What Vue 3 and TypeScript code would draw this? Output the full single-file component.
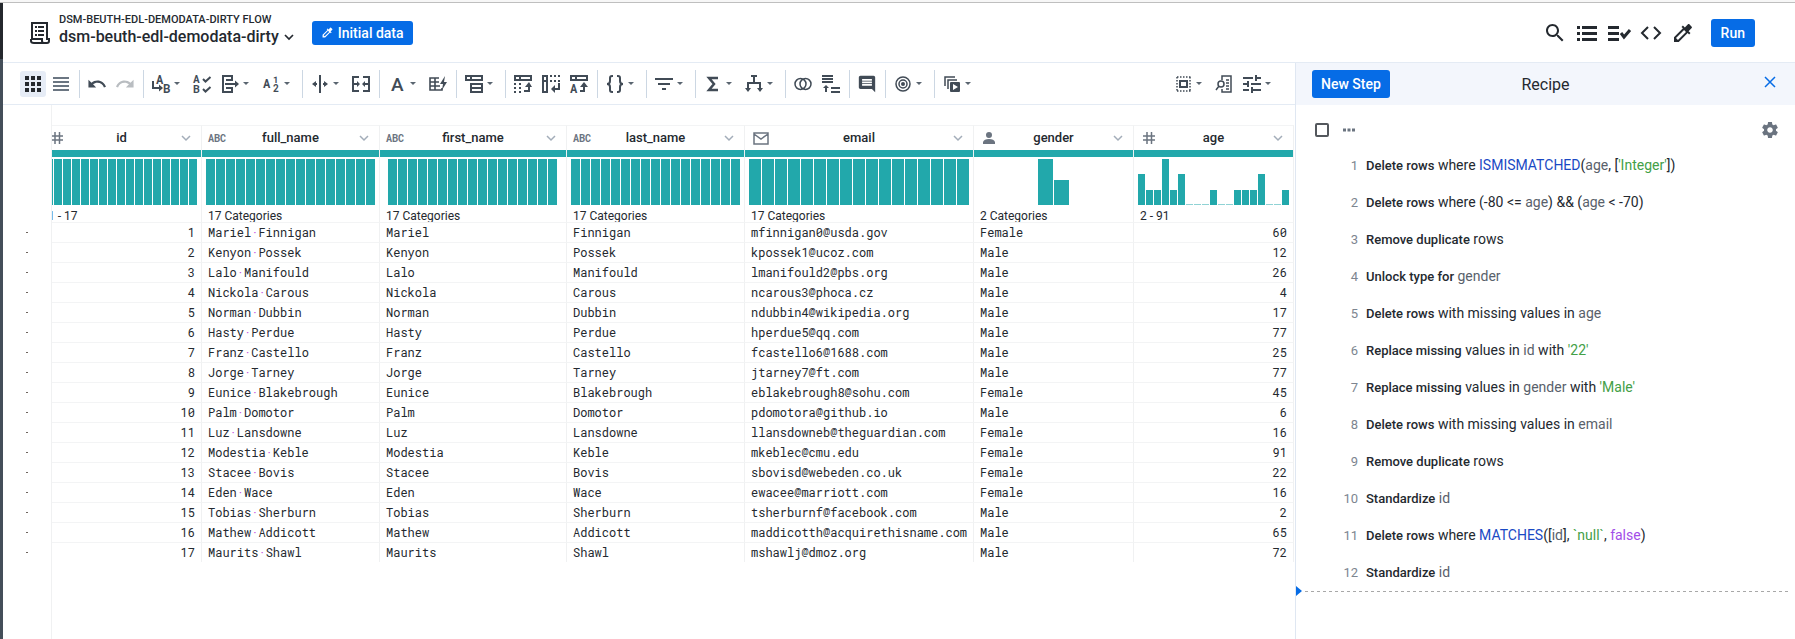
<script setup lang="ts">
import { h, ref } from 'vue'

interface Mark {
  d: string
  w?: number
  dash?: string
}
interface Letter {
  x: number
  y: number
  size: number
  t: string
  weight?: number
  family?: string
}
interface IconDef {
  box?: string
  marks: Mark[]
  letters?: Letter[]
}
interface Tool {
  icon: string
  label: string
  menu?: boolean
  muted?: boolean
}
interface Column {
  key: string
  kind: 'number' | 'text' | 'email' | 'person'
  summary: string
  bar: number
  bars: number[]
}
interface Part {
  t: string
  c?: 'verb' | 'fn' | 'col' | 'str' | 'bool'
}

const icons: Record<string, IconDef> = {
  recipe: {
    box: '0 0 20 22',
    marks: [
      { d: 'M2 17V1h15v16', w: 2 },
      { d: 'M1 17h11v2q0 2 2 2h3q2 0 2-2v-2h-3M1 17v2q0 2 3 2h11', w: 2 },
      { d: 'M5 4h2v2H5zM5 8h2v2H5zM5 12h2v2H5zM8 4h6v2H8zM8 8h6v2H8zM8 12h6v2H8z' },
    ],
  },
  chevron: { box: '0 0 10 8', marks: [{ d: 'M1 2l4 4 4-4', w: 1.7 }] },
  thinChevron: { box: '0 0 10 8', marks: [{ d: 'M1 2l4 4 4-4', w: 1.5 }] },
  dropper: {
    box: '2 2 20 20',
    marks: [
      {
        d: 'M20.71 5.63l-2.34-2.34c-.39-.39-1.02-.39-1.41 0l-3.12 3.12-1.93-1.91-1.41 1.41 1.42 1.42L3 16.25V21h4.75l8.92-8.92 1.42 1.42 1.41-1.41-1.92-1.92 3.12-3.12c.4-.4.4-1.03.01-1.42zM6.92 19L5 17.08l8.06-8.06 1.92 1.92L6.92 19z',
      },
    ],
  },
  search: {
    box: '2 2 20 20',
    marks: [
      {
        d: 'M15.5 14h-.79l-.28-.27C15.41 12.59 16 11.11 16 9.5 16 5.91 13.09 3 9.5 3S3 5.91 3 9.5 5.91 16 9.5 16c1.61 0 3.09-.59 4.23-1.57l.27.28v.79l5 4.99L20.49 19l-4.99-5zm-6 0C7.01 14 5 11.99 5 9.5S7.01 5 9.5 5 14 7.01 14 9.5 11.99 14 9.5 14z',
      },
    ],
  },
  bullets: {
    box: '0 0 22 20',
    marks: [{ d: 'M1 3h3v3H1zM1 9h3v3H1zM1 15h3v3H1zM6 3h15v3H6zM6 9h15v3H6zM6 15h15v3H6z' }],
  },
  listCheck: {
    box: '0 0 24 20',
    marks: [{ d: 'M1 3h11v3H1zM1 9h11v3H1zM1 15h11v3H1z' }, { d: 'M14 10l3 4 6-7', w: 3 }],
  },
  code: { box: '0 0 20 20', marks: [{ d: 'M7 4l-6 6 6 6M13 4l6 6-6 6', w: 2 }] },
  grid: {
    marks: [
      {
        d: 'M1 1h4v4H1zM7 1h4v4H7zM13 1h4v4h-4zM1 7h4v4H1zM7 7h4v4H7zM13 7h4v4h-4zM1 13h4v4H1zM7 13h4v4H7zM13 13h4v4h-4z',
      },
    ],
  },
  lines: { marks: [{ d: 'M1 3h16M1 7h16M1 11h16M1 15h16', w: 2 }] },
  undo: {
    box: '1.5 1.5 21 21',
    marks: [
      {
        d: 'M12.5 8c-2.65 0-5.05.99-6.9 2.6L2 7v9h9l-3.62-3.62c1.39-1.16 3.16-1.88 5.12-1.88 3.54 0 6.55 2.31 7.6 5.5l2.37-.78C21.08 11.03 17.15 8 12.5 8z',
      },
    ],
  },
  redo: {
    box: '1.5 1.5 21 21',
    marks: [
      {
        d: 'M18.4 10.6C16.55 8.99 14.15 8 11.5 8c-4.65 0-8.58 3.03-9.96 7.22L3.9 16c1.05-3.19 4.05-5.5 7.6-5.5 1.95 0 3.73.72 5.12 1.88L13 16h9V7l-3.6 3.6z',
      },
    ],
  },
  replace: {
    marks: [{ d: 'M1 6v7h7', w: 2 }, { d: 'M7 9.5l4 3.5-4 3.5z' }],
    letters: [
      { x: 4, y: 9, size: 12, t: 'A' },
      { x: 11, y: 18, size: 12, t: 'B' },
    ],
  },
  standardize: {
    marks: [{ d: 'M10 4l2.5 2.5L17.5 2M10 14l2.5 2.5L17.5 12', w: 2 }],
    letters: [
      { x: 0, y: 8, size: 11, t: 'A' },
      { x: 0, y: 18, size: 11, t: 'B' },
    ],
  },
  extract: {
    marks: [{ d: 'M11 6V1H2v16h9v-5M5 5h6M5 13h6M4 9h11', w: 2 }, { d: 'M14 5.5L18 9l-4 3.5z' }],
  },
  count: {
    marks: [],
    letters: [
      { x: 1, y: 13, size: 12, t: 'A' },
      { x: 11, y: 8, size: 9, t: '1' },
      { x: 11, y: 17, size: 10, t: '2' },
    ],
  },
  split: {
    marks: [{ d: 'M9 0v18', w: 2 }, { d: 'M3 9h3M12 9h3', w: 2 }, { d: 'M5 6L1 9l4 3zM13 6l4 3-4 3z' }],
  },
  merge: {
    marks: [
      { d: 'M7 2H1v14h6M11 2h6v14h-6M2 9h3M13 9h3', w: 2 },
      { d: 'M5 6l3 3-3 3zM13 6l-3 3 3 3z' },
    ],
  },
  format: {
    marks: [],
    letters: [{ x: 3, y: 16, size: 19, t: 'A', weight: 500, family: 'Roboto, sans-serif' }],
  },
  tableBolt: {
    marks: [{ d: 'M10 3H1v12h12v-2M1 7h9M1 11h10M6 3v12', w: 1.6 }, { d: 'M16 1l-5 8h3l-1 6 5-8h-3z' }],
  },
  nest: {
    marks: [{ d: 'M1 1h16v4H1zM6 1v4M6 9h11v8H6zM6 13h11', w: 2 }],
  },
  pivot: {
    marks: [
      { d: 'M1 1h16v4H1zM6 1v4M10 16h5v-5', w: 2 },
      { d: 'M11 12l4-5 3 5z' },
      { d: 'M1 8v10M6 8v10', w: 2, dash: '2 2' },
    ],
  },
  unpivot: {
    marks: [
      { d: 'M1 1h4v16H1zM1 6h4M17 8v6h-5', w: 2 },
      { d: 'M13 10v8l-4-4z' },
      { d: 'M8 1h10M8 6h10', w: 2, dash: '2 2' },
    ],
  },
  headerRow: {
    marks: [{ d: 'M1 1h16v4H1zM6 1v4M10 16h4v-5', w: 2 }, { d: 'M10 12l4-5 4 5z' }],
    letters: [{ x: 0, y: 18, size: 12, t: 'A' }],
  },
  braces: {
    marks: [
      { d: 'M7 1H6Q4 1 4 3v3q0 3-3 3 3 0 3 3v3q0 2 2 2h1M11 1h1q2 0 2 2v3q0 3 3 3-3 0-3 3v3q0 2-2 2h-1', w: 2 },
    ],
  },
  filter: { marks: [{ d: 'M0 4h18M3 9h12M7 14h4', w: 2 }] },
  sum: { marks: [{ d: 'M14 3H5l5 6-5 6h9', w: 2.5 }] },
  branch: {
    marks: [{ d: 'M6 1h6M9 1v7M3 14V8h12v6', w: 2 }, { d: 'M0 13h6l-3 4zM12 13h6l-3 4z' }],
  },
  join: {
    marks: [
      { d: 'M1 9a5.5 5.5 0 1 0 11 0a5.5 5.5 0 1 0-11 0M6 9a5.5 5.5 0 1 0 11 0a5.5 5.5 0 1 0-11 0', w: 1.5 },
    ],
  },
  union: {
    marks: [{ d: 'M0 1h11M0 4h11M0 7h11M9 13h9M9 17h9', w: 2 }, { d: 'M4 12v5', w: 2 }, { d: 'M1 13l3-3 3 3z' }],
  },
  comment: {
    box: '1 1 22 22',
    marks: [
      {
        d: 'M21.99 4c0-1.1-.89-2-1.99-2H4c-1.1 0-2 .9-2 2v12c0 1.1.9 2 2 2h14l4 4-.01-18zM18 14H6v-2h12v2zm0-3H6V9h12v2zm0-3H6V6h12v2z',
      },
    ],
  },
  target: {
    marks: [
      { d: 'M2 9a7 7 0 1 0 14 0a7 7 0 1 0-14 0M5 9a4 4 0 1 0 8 0a4 4 0 1 0-8 0', w: 1.5 },
      { d: 'M7 9a2 2 0 1 0 4 0a2 2 0 1 0-4 0' },
    ],
  },
  stack: {
    marks: [
      { d: 'M2 11V2h10M5 14V5h9', w: 1.5 },
      { d: 'M8 7h8q1 0 1 1v8q0 1-1 1H8q-1 0-1-1V8q0-1 1-1zM10 9v6l5-3z' },
    ],
  },
  selection: {
    marks: [
      { d: 'M3 2h14M3 16h14M3 2v14M16 2v14', w: 1.5, dash: '1.5 1.5' },
      { d: 'M6 6h7v6H6z', w: 2 },
    ],
  },
  inspect: {
    marks: [
      { d: 'M7 5V1h9v16H7v-3', w: 1.5 },
      { d: 'M3 9a3 3 0 1 0 6 0a3 3 0 1 0-6 0M4 11l-3 4', w: 1.5 },
      { d: 'M11 5h3M11 8h3M11 11h3M11 14h3', w: 1.5 },
    ],
  },
  tune: {
    box: '3 3 18 18',
    marks: [
      {
        d: 'M3 17v2h6v-2H3zM3 5v2h10V5H3zm10 16v-2h8v-2h-8v-2h-2v6h2zM7 9v2H3v2h4v2h2V9H7zm14 4v-2H11v2h10zm-6-4h2V7h4V5h-4V3h-2v6z',
      },
    ],
  },
  gear: {
    box: '2 2 20 20',
    marks: [
      {
        d: 'M19.43 12.98c.04-.32.07-.64.07-.98s-.03-.66-.07-.98l2.11-1.65c.19-.15.24-.42.12-.64l-2-3.46c-.12-.22-.39-.3-.61-.22l-2.49 1c-.52-.4-1.08-.73-1.69-.98l-.38-2.65C14.46 2.18 14.25 2 14 2h-4c-.25 0-.46.18-.49.42l-.38 2.65c-.61.25-1.17.59-1.69.98l-2.49-1c-.23-.09-.49 0-.61.22l-2 3.46c-.13.22-.07.49.12.64l2.11 1.65c-.04.32-.07.65-.07.98s.03.66.07.98l-2.11 1.65c-.19.15-.24.42-.12.64l2 3.46c.12.22.39.3.61.22l2.49-1c.52.4 1.08.73 1.69.98l.38 2.65c.03.24.24.42.49.42h4c.25 0 .46-.18.49-.42l.38-2.65c.61-.25 1.17-.59 1.69-.98l2.49 1c.23.09.49 0 .61-.22l2-3.46c.12-.22.07-.49-.12-.64l-2.11-1.65zM12 15.5c-1.93 0-3.5-1.57-3.5-3.5s1.57-3.5 3.5-3.5 3.5 1.57 3.5 3.5-1.57 3.5-3.5 3.5z',
      },
    ],
  },
  close: { box: '0 0 12 12', marks: [{ d: 'M1 1l10 10M11 1L1 11', w: 1.5 }] },
  dots: { box: '0 0 12 4', marks: [{ d: 'M0 .5h3v3H0zM4.5 .5h3v3h-3zM9 .5h3v3H9z' }] },
  number: { box: '0 0 12 12', marks: [{ d: 'M0 4h12M0 8h12M4 0v12M8.5 0v12', w: 1.5 }] },
  email: { box: '0 0 16 14', marks: [{ d: 'M1 2h14v11H1zM1 3l7 5 7-5', w: 1.5 }] },
  person: {
    box: '0 0 12 12',
    marks: [{ d: 'M6 0a3 3 0 1 1 0 6a3 3 0 1 1 0-6zM0 12v-2q1-3 6-3t6 3v2z' }],
  },
}

const Icon = (props: { name: string; width?: number; height?: number }) => {
  const def = icons[props.name]
  return h(
    'svg',
    {
      width: props.width ?? 18,
      height: props.height ?? 18,
      viewBox: def.box ?? '0 0 18 18',
      'aria-hidden': 'true',
    },
    [
      ...def.marks.map((m) =>
        h('path', {
          d: m.d,
          fill: m.w ? 'none' : 'currentColor',
          'fill-rule': 'evenodd',
          stroke: m.w ? 'currentColor' : 'none',
          'stroke-width': m.w,
          'stroke-dasharray': m.dash,
        }),
      ),
      ...(def.letters ?? []).map((l) =>
        h(
          'text',
          {
            x: l.x,
            y: l.y,
            'font-size': l.size,
            'font-weight': l.weight ?? 700,
            'font-family': l.family ?? "'Roboto Mono', 'DejaVu Sans Mono', monospace",
            fill: 'currentColor',
          },
          l.t,
        ),
      ),
    ],
  )
}
Icon.props = ['name', 'width', 'height']

const toolGroups: Tool[][] = [
  [
    { icon: 'undo', label: 'Undo' },
    { icon: 'redo', label: 'Redo', muted: true },
  ],
  [
    { icon: 'replace', label: 'Replace', menu: true },
    { icon: 'standardize', label: 'Standardize' },
    { icon: 'extract', label: 'Extract', menu: true },
    { icon: 'count', label: 'Count matches', menu: true },
  ],
  [
    { icon: 'split', label: 'Split column', menu: true },
    { icon: 'merge', label: 'Merge columns' },
  ],
  [
    { icon: 'format', label: 'Format', menu: true },
    { icon: 'tableBolt', label: 'Lookup' },
  ],
  [{ icon: 'nest', label: 'Group', menu: true }],
  [
    { icon: 'pivot', label: 'Pivot' },
    { icon: 'unpivot', label: 'Unpivot' },
    { icon: 'headerRow', label: 'Rows to headers' },
  ],
  [{ icon: 'braces', label: 'Nested data', menu: true }],
  [{ icon: 'filter', label: 'Filter', menu: true }],
  [
    { icon: 'sum', label: 'Functions', menu: true },
    { icon: 'branch', label: 'Conditional', menu: true },
  ],
  [
    { icon: 'join', label: 'Join' },
    { icon: 'union', label: 'Union' },
  ],
  [{ icon: 'comment', label: 'Comment' }],
  [{ icon: 'target', label: 'Target', menu: true }],
  [{ icon: 'stack', label: 'Macros', menu: true }],
]

const sideTools: Tool[] = [
  { icon: 'selection', label: 'Selection', menu: true },
  { icon: 'inspect', label: 'Find column' },
  { icon: 'tune', label: 'View options', menu: true },
]

const headerTools = [
  { icon: 'search', label: 'Search', width: 20 },
  { icon: 'bullets', label: 'Recipe', width: 22 },
  { icon: 'listCheck', label: 'Checks', width: 24 },
  { icon: 'code', label: 'Code', width: 20 },
  { icon: 'dropper', label: 'Samples', width: 20 },
]

const full = (n: number): number[] => Array.from({ length: n }, () => 46)

const columns: Column[] = [
  { key: 'id', kind: 'number', summary: '1 - 17', bar: 8, bars: full(17) },
  { key: 'full_name', kind: 'text', summary: '17 Categories', bar: 9, bars: full(17) },
  { key: 'first_name', kind: 'text', summary: '17 Categories', bar: 9, bars: full(17) },
  { key: 'last_name', kind: 'text', summary: '17 Categories', bar: 9, bars: full(17) },
  { key: 'email', kind: 'email', summary: '17 Categories', bar: 12, bars: full(17) },
  { key: 'gender', kind: 'person', summary: '2 Categories', bar: 15, bars: [46, 25] },
  {
    key: 'age',
    kind: 'number',
    summary: '2 - 91',
    bar: 7,
    bars: [31, 15, 15, 46, 15, 31, 0, 0, 0, 15, 0, 0, 15, 15, 15, 31, 0, 0, 15],
  },
]

const people: [string, string, string, string, number][] = [
  ['Mariel', 'Finnigan', 'mfinnigan0@usda.gov', 'Female', 60],
  ['Kenyon', 'Possek', 'kpossek1@ucoz.com', 'Male', 12],
  ['Lalo', 'Manifould', 'lmanifould2@pbs.org', 'Male', 26],
  ['Nickola', 'Carous', 'ncarous3@phoca.cz', 'Male', 4],
  ['Norman', 'Dubbin', 'ndubbin4@wikipedia.org', 'Male', 17],
  ['Hasty', 'Perdue', 'hperdue5@qq.com', 'Male', 77],
  ['Franz', 'Castello', 'fcastello6@1688.com', 'Male', 25],
  ['Jorge', 'Tarney', 'jtarney7@ft.com', 'Male', 77],
  ['Eunice', 'Blakebrough', 'eblakebrough8@sohu.com', 'Female', 45],
  ['Palm', 'Domotor', 'pdomotora@github.io', 'Male', 6],
  ['Luz', 'Lansdowne', 'llansdowneb@theguardian.com', 'Female', 16],
  ['Modestia', 'Keble', 'mkeblec@cmu.edu', 'Female', 91],
  ['Stacee', 'Bovis', 'sbovisd@webeden.co.uk', 'Female', 22],
  ['Eden', 'Wace', 'ewacee@marriott.com', 'Female', 16],
  ['Tobias', 'Sherburn', 'tsherburnf@facebook.com', 'Male', 2],
  ['Mathew', 'Addicott', 'maddicotth@acquirethisname.com', 'Male', 65],
  ['Maurits', 'Shawl', 'mshawlj@dmoz.org', 'Male', 72],
]

const steps: Part[][] = [
  [
    { t: 'Delete rows', c: 'verb' },
    { t: ' where ' },
    { t: 'ISMISMATCHED', c: 'fn' },
    { t: '(' },
    { t: 'age', c: 'col' },
    { t: ', [' },
    { t: "'Integer'", c: 'str' },
    { t: '])' },
  ],
  [
    { t: 'Delete rows', c: 'verb' },
    { t: ' where (-80 <= ' },
    { t: 'age', c: 'col' },
    { t: ') && (' },
    { t: 'age', c: 'col' },
    { t: ' < -70)' },
  ],
  [{ t: 'Remove duplicate', c: 'verb' }, { t: ' rows' }],
  [{ t: 'Unlock type for', c: 'verb' }, { t: ' gender', c: 'col' }],
  [{ t: 'Delete rows', c: 'verb' }, { t: ' with missing values in ' }, { t: 'age', c: 'col' }],
  [
    { t: 'Replace missing', c: 'verb' },
    { t: ' values in ' },
    { t: 'id', c: 'col' },
    { t: ' with ' },
    { t: "'22'", c: 'str' },
  ],
  [
    { t: 'Replace missing', c: 'verb' },
    { t: ' values in ' },
    { t: 'gender', c: 'col' },
    { t: ' with ' },
    { t: "'Male'", c: 'str' },
  ],
  [{ t: 'Delete rows', c: 'verb' }, { t: ' with missing values in ' }, { t: 'email', c: 'col' }],
  [{ t: 'Remove duplicate', c: 'verb' }, { t: ' rows' }],
  [{ t: 'Standardize', c: 'verb' }, { t: ' id', c: 'col' }],
  [
    { t: 'Delete rows', c: 'verb' },
    { t: ' where ' },
    { t: 'MATCHES', c: 'fn' },
    { t: '([' },
    { t: 'id', c: 'col' },
    { t: '], ' },
    { t: '`null`', c: 'str' },
    { t: ', ' },
    { t: 'false', c: 'bool' },
    { t: ')' },
  ],
  [{ t: 'Standardize', c: 'verb' }, { t: ' id', c: 'col' }],
]

const allSelected = ref(false)
const view = ref<'grid' | 'lines'>('grid')
</script>

<template>
  <div class="app">
    <div class="window-edge"></div>
    <div class="shell">
      <div class="rail"></div>
      <div class="content">
        <header class="header">
          <Icon name="recipe" :width="20" :height="22" />
          <div class="titles">
            <div class="flow">DSM-BEUTH-EDL-DEMODATA-DIRTY FLOW</div>
            <button class="title" type="button">
              dsm-beuth-edl-demodata-dirty
              <Icon name="chevron" :width="10" :height="8" />
            </button>
          </div>
          <button class="primary sample" type="button">
            <Icon name="dropper" :width="11" :height="11" />
            Initial data
          </button>
          <div class="header-tools">
            <button
              v-for="tool in headerTools"
              :key="tool.icon"
              class="header-tool"
              type="button"
              :aria-label="tool.label"
            >
              <Icon :name="tool.icon" :width="tool.width" :height="20" />
            </button>
          </div>
          <button class="primary run" type="button">Run</button>
        </header>

        <div class="body">
          <main class="workspace">
            <div class="toolbar">
              <div class="group">
                <button
                  v-for="mode in (['grid', 'lines'] as const)"
                  :key="mode"
                  class="mode"
                  :class="[mode, { active: view === mode }]"
                  type="button"
                  :aria-label="mode"
                  @click="view = mode"
                >
                  <Icon :name="mode" />
                </button>
              </div>
              <div v-for="(group, g) in toolGroups" :key="g" class="group divided">
                <button
                  v-for="tool in group"
                  :key="tool.icon"
                  class="tool"
                  :class="{ menu: tool.menu, muted: tool.muted }"
                  type="button"
                  :aria-label="tool.label"
                >
                  <Icon :name="tool.icon" />
                  <span v-if="tool.menu" class="caret"></span>
                </button>
              </div>
              <div class="group side">
                <button
                  v-for="tool in sideTools"
                  :key="tool.icon"
                  class="tool"
                  :class="{ menu: tool.menu }"
                  type="button"
                  :aria-label="tool.label"
                >
                  <Icon :name="tool.icon" />
                  <span v-if="tool.menu" class="caret"></span>
                </button>
              </div>
            </div>

            <div class="sheet">
              <div class="gutter">
                <span v-for="n in people.length" :key="n" class="row-mark"></span>
              </div>
              <div class="viewport">
                <table class="data">
                  <colgroup>
                    <col v-for="col in columns" :key="col.key" :class="'w-' + col.key" />
                  </colgroup>
                  <thead>
                    <tr>
                      <th v-for="col in columns" :key="col.key" scope="col">
                        <div class="col-head">
                          <span class="kind" :class="col.kind">
                            <template v-if="col.kind === 'text'">ABC</template>
                            <Icon v-else-if="col.kind === 'email'" name="email" :width="16" :height="14" />
                            <Icon v-else :name="col.kind" :width="12" :height="12" />
                          </span>
                          <span class="name">{{ col.key }}</span>
                          <button class="col-menu" type="button" :aria-label="col.key + ' menu'">
                            <Icon name="thinChevron" :width="10" :height="8" />
                          </button>
                        </div>
                        <div class="quality"></div>
                        <div class="histogram">
                          <span
                            v-for="(value, b) in col.bars"
                            :key="b"
                            class="bar"
                            :class="{ empty: value === 0 }"
                            :style="{ width: col.bar + 'px', height: Math.max(value, 1) + 'px' }"
                          ></span>
                        </div>
                        <div class="summary">{{ col.summary }}</div>
                      </th>
                    </tr>
                  </thead>
                  <tbody>
                    <tr v-for="(p, i) in people" :key="i">
                      <td class="num">{{ i + 1 }}</td>
                      <td>{{ p[0] }}<span class="space">·</span>{{ p[1] }}</td>
                      <td>{{ p[0] }}</td>
                      <td>{{ p[1] }}</td>
                      <td>{{ p[2] }}</td>
                      <td>{{ p[3] }}</td>
                      <td class="num">{{ p[4] }}</td>
                    </tr>
                  </tbody>
                </table>
              </div>
            </div>
          </main>

          <aside class="recipe">
            <div class="recipe-head">
              <button class="primary new-step" type="button">New Step</button>
              <h2>Recipe</h2>
              <button class="close" type="button" aria-label="Close">
                <Icon name="close" :width="12" :height="12" />
              </button>
            </div>
            <div class="recipe-tools">
              <input v-model="allSelected" type="checkbox" aria-label="Select all steps" />
              <button class="more" type="button" aria-label="More">
                <Icon name="dots" :width="12" :height="4" />
              </button>
              <button class="settings" type="button" aria-label="Settings">
                <Icon name="gear" :width="16" :height="16" />
              </button>
            </div>
            <ol class="steps">
              <li v-for="(step, i) in steps" :key="i">
                <span class="index">{{ i + 1 }}</span>
                <span class="step"><span v-for="(part, k) in step" :key="k" :class="part.c">{{ part.t }}</span></span>
              </li>
            </ol>
            <div class="cursor"></div>
          </aside>
        </div>
      </div>
    </div>
  </div>
</template>

<style>
body {
  margin: 0;
  background: #fff;
}
</style>

<style scoped>
* {
  box-sizing: border-box;
}
.app {
  display: flex;
  flex-direction: column;
  min-height: 100vh;
  font-family: Roboto, sans-serif;
  color: #24292f;
}
svg {
  display: block;
  flex: none;
  overflow: visible;
}
button {
  display: flex;
  align-items: center;
  padding: 0;
  border: 0;
  background: none;
  color: inherit;
  font: inherit;
  cursor: pointer;
}
.window-edge {
  height: 3px;
  background: #f7f7f7;
  border-bottom: 1px solid #bfbfbf;
}
.shell {
  display: flex;
  flex: 1;
}
.rail {
  width: 3px;
  background: linear-gradient(#24282d 56px, #444e59 56px);
}
.content {
  display: flex;
  flex: 1;
  flex-direction: column;
  min-width: 0;
}
.header {
  display: flex;
  align-items: center;
  height: 60px;
  padding: 0 40px 0 27px;
  border-bottom: 1px solid #e4ebf4;
}
.titles {
  margin: 0 18px 0 9px;
  padding-bottom: 5px;
}
.flow {
  font-size: 11px;
  font-weight: 500;
  line-height: 14px;
}
.title {
  gap: 5px;
  font-size: 16px;
  font-weight: 500;
  line-height: 20px;
}
.primary {
  justify-content: center;
  border-radius: 3px;
  background: #066ce6;
  color: #fff;
  font-size: 14px;
  font-weight: 500;
}
.sample {
  gap: 5px;
  height: 24px;
  padding: 0 9px 0 10px;
}
.header-tools {
  display: flex;
  margin-left: auto;
}
.header-tool {
  justify-content: center;
  width: 32px;
  height: 32px;
}
.run {
  height: 28px;
  margin-left: 12px;
  padding: 0 10px;
}
.body {
  display: flex;
  flex: 1;
}
.workspace {
  display: flex;
  flex: 1;
  flex-direction: column;
  min-width: 0;
}
.toolbar {
  display: flex;
  align-items: center;
  height: 42px;
  padding: 0 16px;
  border-bottom: 1px solid #e4ebf4;
  color: #414b56;
}
.group {
  display: flex;
  align-items: center;
}
.divided::before {
  width: 1px;
  height: 28px;
  margin: 0 3px 0 4px;
  background: #ccd7e3;
  content: '';
}
.side {
  margin-left: auto;
}
.mode {
  justify-content: center;
  width: 26px;
  height: 26px;
  margin: 0 1px;
  border-radius: 3px;
  color: #6b7682;
}
.mode.active {
  background: #e6ecf6;
  color: #24282d;
}
.tool {
  width: 28px;
  height: 28px;
  padding: 0 5px;
}
.tool.menu {
  gap: 4px;
  width: 41px;
}
.tool.muted {
  color: #b9bdc1;
}
.caret {
  border-top: 3px solid #5a6570;
  border-right: 3px solid transparent;
  border-left: 3px solid transparent;
}
.sheet {
  display: flex;
  flex: 1;
}
.gutter {
  display: flex;
  flex-direction: column;
  width: 49px;
  padding-top: 117px;
  border-right: 1px solid #f0f1f2;
}
.row-mark {
  display: flex;
  align-items: center;
  height: 20px;
  padding-left: 23px;
}
.row-mark::before {
  width: 2px;
  height: 1px;
  background: #6f6660;
  content: '';
}
.viewport {
  flex: 1;
  min-width: 0;
  padding-top: 20px;
  overflow: hidden;
}
.data {
  width: 1252px;
  margin-left: -10px;
  border-spacing: 0;
  table-layout: fixed;
}
.w-id,
.w-gender,
.w-age {
  width: 160px;
}
.w-full_name,
.w-last_name {
  width: 178px;
}
.w-first_name {
  width: 187px;
}
.w-email {
  width: 229px;
}
th,
td {
  padding: 0;
  border-top: 1px solid #f3f4f5;
  border-right: 1px solid #f0f1f2;
  text-align: left;
}
.col-head {
  display: grid;
  grid-template-columns: 26px 1fr 26px;
  align-items: center;
  height: 24px;
  font-size: 13px;
  font-weight: 500;
}
.kind {
  padding-left: 9px;
  color: #6b7480;
}
.kind.text {
  padding-left: 6px;
  font-family: 'Roboto Mono', 'DejaVu Sans Mono', monospace;
  font-size: 10px;
  font-weight: 700;
}
.kind.email {
  padding-left: 8px;
}
.name {
  padding-bottom: 2px;
  text-align: center;
}
.col-menu {
  justify-content: flex-end;
  padding-right: 10px;
  color: #a3adb9;
}
.quality {
  height: 7px;
  background: #22a8ab;
}
.histogram {
  display: flex;
  align-items: flex-end;
  justify-content: center;
  gap: 1px;
  height: 48px;
  padding-right: 1px;
}
.bar {
  background: #22a8ab;
}
.bar.empty {
  background: #90d3d5;
}
.summary {
  height: 17px;
  padding: 4px 6px 0;
  overflow: hidden;
  font-size: 12px;
  font-weight: 400;
  line-height: 14px;
}
td {
  height: 20px;
  padding: 0 6px;
  font-family: 'Roboto Mono', 'DejaVu Sans Mono', 'Liberation Mono', monospace;
  font-size: 12px;
  line-height: 19px;
  white-space: nowrap;
}
.num {
  text-align: right;
}
.space {
  color: #c44fe0;
}
.recipe {
  width: 500px;
  border-left: 1px solid #dfe7f2;
}
.recipe-head {
  display: grid;
  grid-template-columns: 100px 1fr 100px;
  align-items: center;
  height: 42px;
  padding: 0 16px;
  background: #f3f6fc;
}
.new-step {
  justify-self: start;
  height: 28px;
  padding: 0 9px;
}
h2 {
  margin: 0;
  font-size: 16px;
  font-weight: 400;
  text-align: center;
}
.close {
  justify-self: end;
  padding: 0 3px 4px 0;
  color: #066ce6;
}
.recipe-tools {
  display: flex;
  align-items: center;
  height: 42px;
  padding: 8px 17px 0 19px;
  color: #6b7480;
}
input[type='checkbox'] {
  width: 14px;
  height: 14px;
  margin: 0 14px 0 0;
  border: 2px solid #54585d;
  border-radius: 2px;
  appearance: none;
}
input[type='checkbox']:checked {
  background: #066ce6;
}
.settings {
  margin-left: auto;
}
.steps {
  margin: 0;
  padding: 0;
  list-style: none;
}
.steps li {
  display: flex;
  align-items: baseline;
  height: 37px;
  font-size: 14px;
  line-height: 36px;
}
.index {
  width: 62px;
  margin-right: 8px;
  color: #7d8590;
  font-size: 13px;
  text-align: right;
}
.step {
  white-space: pre-wrap;
}
.verb {
  font-size: 13px;
  font-weight: 500;
}
.fn {
  color: #1a49c4;
}
.col {
  color: #59616b;
}
.str {
  color: #43a047;
}
.bool {
  color: #a24de8;
}
.cursor {
  display: flex;
  align-items: center;
  gap: 3px;
  height: 10px;
  margin-top: -5px;
  padding-right: 4px;
}
.cursor::before {
  border-top: 5px solid transparent;
  border-bottom: 5px solid transparent;
  border-left: 6px solid #066ce6;
  content: '';
}
.cursor::after {
  flex: 1;
  height: 1px;
  background: repeating-linear-gradient(90deg, #a8a8a8 0 3px, transparent 3px 6px);
  content: '';
}
</style>
